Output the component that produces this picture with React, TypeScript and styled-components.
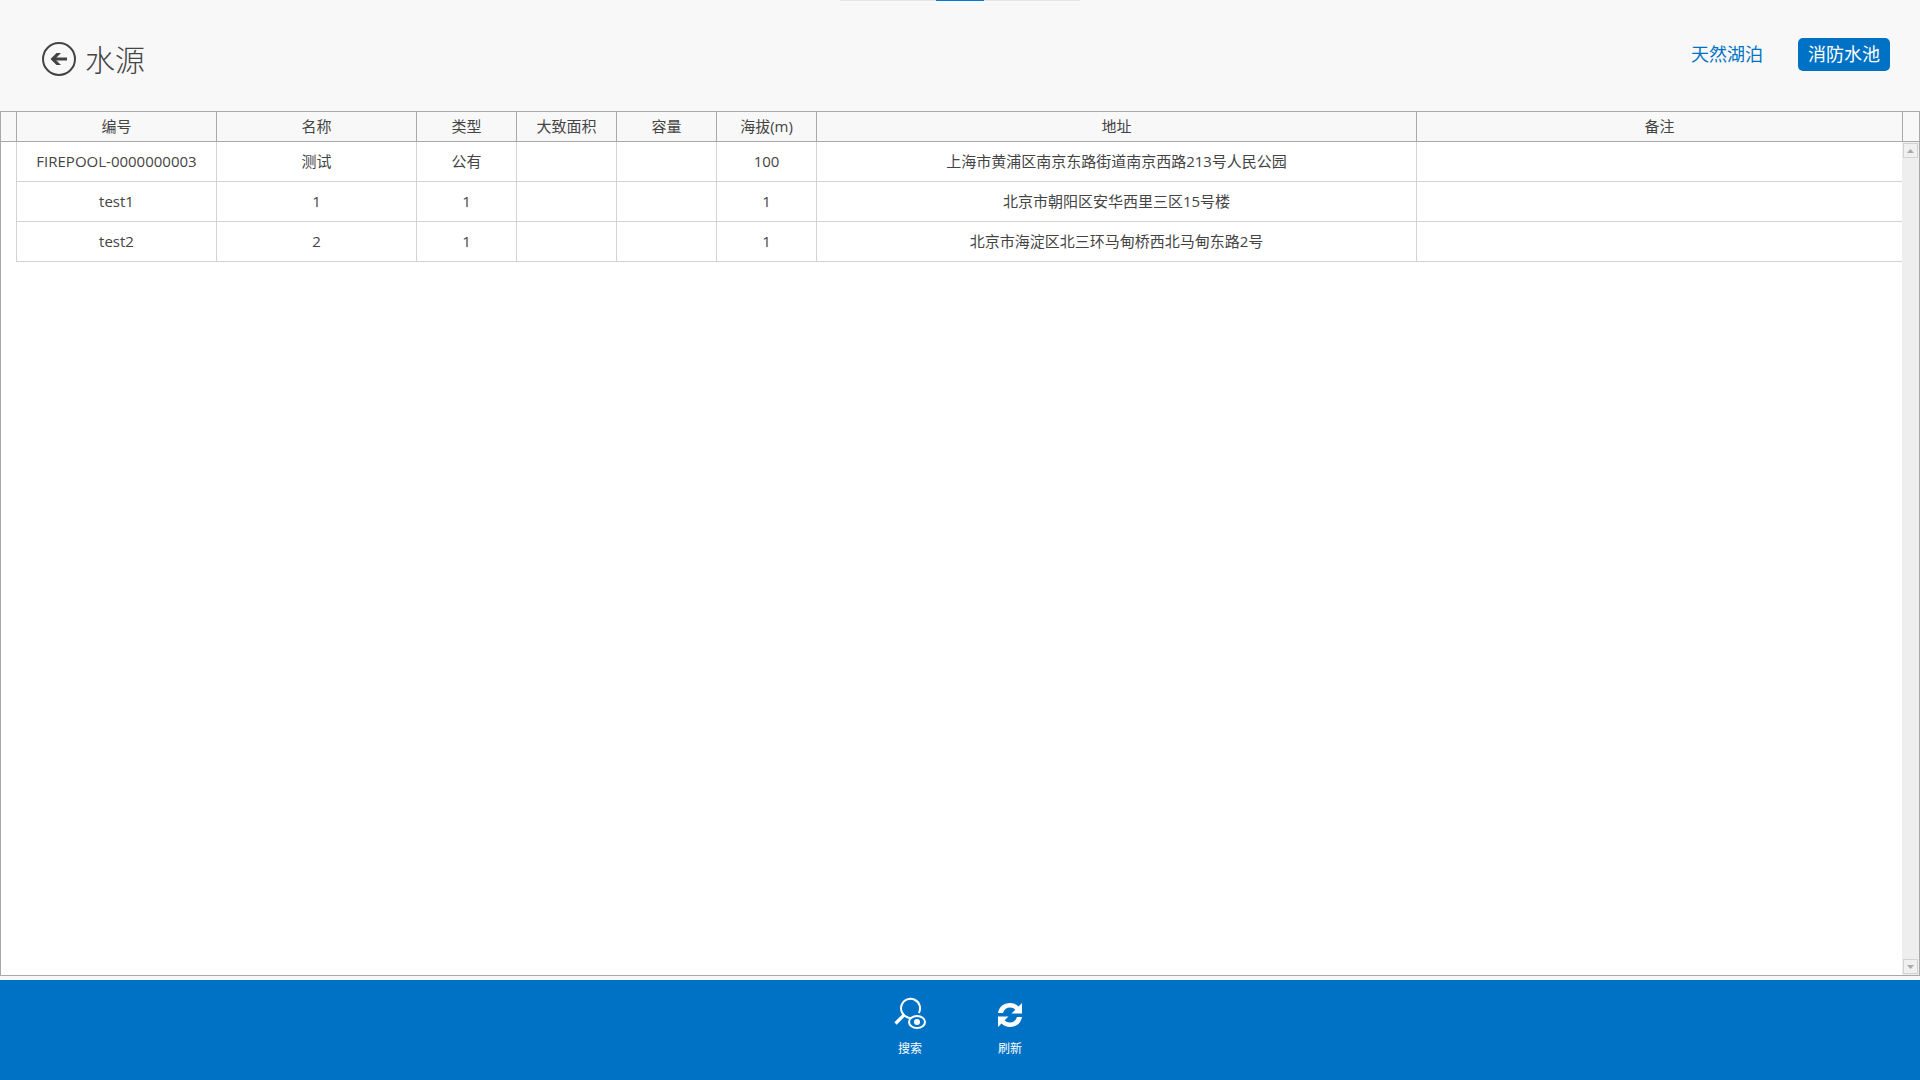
import React from "react";
import styled, { createGlobalStyle } from "styled-components";

const GlobalStyle = createGlobalStyle`
  *, *::before, *::after { box-sizing: border-box; }
  body {
    margin: 0;
    background: #f8f8f8;
    color: #444;
    font-family: "Open Sans", "Noto Sans CJK SC", sans-serif;
    font-size: 15px;
  }
  button { font-family: inherit; padding: 0; border: 0; background: none; color: inherit; cursor: pointer; }
`;

const Page = styled.div`
  display: flex;
  flex-direction: column;
  height: 100vh;
  position: relative;
`;

const TopTrack = styled.div`
  position: absolute;
  top: 0;
  left: 50%;
  width: 240px;
  height: 1px;
  margin-left: -120px;
  display: flex;
  justify-content: center;
  background: #e5e5e5;
`;

const TopThumb = styled.span`
  width: 48px;
  height: 1px;
  background: #0078d7;
`;

const Header = styled.header`
  display: flex;
  justify-content: space-between;
  align-items: flex-start;
  height: 111px;
  padding: 38px 30px 0 42px;
  flex: none;
`;

const TitleGroup = styled.div`
  display: flex;
  align-items: center;
  gap: 9px;
  height: 42px;
`;

const BackButton = styled.button`
  display: flex;
  width: 34px;
  height: 34px;
`;

const Title = styled.h1`
  margin: 0;
  padding-top: 2px;
  font-size: 30px;
  line-height: 42px;
  font-weight: 300;
`;

const Tabs = styled.nav`
  display: flex;
  gap: 25px;
`;

const Tab = styled.button<{ $active?: boolean }>`
  && {
    height: 33px;
    padding: 0 10px;
    border-radius: 5px;
    font-size: 18px;
    line-height: 33px;
    font-weight: 400;
    color: ${(p) => (p.$active ? "#fff" : "#0072c6")};
    background: ${(p) => (p.$active ? "#0072c6" : "transparent")};
  }
`;

const GridPanel = styled.main`
  display: flex;
  flex: 1;
  min-height: 0;
  margin-bottom: 4px;
  border: 1px solid #a9a9a9;
  background: #fff;
`;

const GridArea = styled.div`
  flex: 1;
  min-width: 0;
`;

const Table = styled.table`
  width: 100%;
  table-layout: fixed;
  border-collapse: separate;
  border-spacing: 0;
`;

const HeadCell = styled.th`
  height: 30px;
  padding: 0 0 2px;
  border-right: 1px solid #a9a9a9;
  border-bottom: 1px solid #a9a9a9;
  background: #f8f8f8;
  font-weight: 400;
  line-height: 20px;

  &:last-child { border-right: 0; }
`;

const Cell = styled.td`
  height: 40px;
  padding: 0 0 2px;
  border-right: 1px solid #d3d3d3;
  border-bottom: 1px solid #d3d3d3;
  line-height: 20px;
  text-align: center;
  white-space: nowrap;

  &:last-child { border-right: 0; }
`;

const RowGutter = styled.td`
  padding: 0;
  border-right: 1px solid #d3d3d3;
`;

const Scroll = styled.div`
  display: flex;
  flex-direction: column;
  width: 17px;
  flex: none;
`;

const ScrollCorner = styled.div`
  height: 30px;
  background: #f8f8f8;
  border-left: 1px solid #a9a9a9;
  border-bottom: 1px solid #a9a9a9;
`;

const ScrollTrack = styled.div`
  flex: 1;
  display: flex;
  flex-direction: column;
  justify-content: space-between;
  align-items: center;
  padding: 1px 0;
  background: #eee;
`;

const ScrollButton = styled.button`
  && {
    display: flex;
    align-items: center;
    justify-content: center;
    width: 15px;
    height: 15px;
    border: 1px solid #d3d3d3;
    background: #f0f0f0;
  }
`;

const AppBar = styled.footer`
  display: flex;
  justify-content: center;
  height: 100px;
  flex: none;
  background: #0072c6;
`;

const AppBarButton = styled.button`
  && {
    display: flex;
    flex-direction: column;
    align-items: center;
    width: 100px;
    padding-top: 14px;
    gap: 5px;
    color: #fff;
    font-size: 12px;
    line-height: 20px;
  }
`;

const columns = [
  { title: "编号", width: 200 },
  { title: "名称", width: 200 },
  { title: "类型", width: 100 },
  { title: "大致面积", width: 100 },
  { title: "容量", width: 100 },
  { title: "海拔(m)", width: 100 },
  { title: "地址", width: 600 },
  { title: "备注" },
];

const rows = [
  ["FIREPOOL-0000000003", "测试", "公有", "", "", "100", "上海市黄浦区南京东路街道南京西路213号人民公园", ""],
  ["test1", "1", "1", "", "", "1", "北京市朝阳区安华西里三区15号楼", ""],
  ["test2", "2", "1", "", "", "1", "北京市海淀区北三环马甸桥西北马甸东路2号", ""],
];

function BackIcon() {
  return (
    <svg width="34" height="34" viewBox="0 0 34 34" fill="none" stroke="#444">
      <circle cx="17" cy="17" r="16" strokeWidth="2" />
      <path d="M25 17H12" strokeWidth="3" />
      <path d="M8.500 17L14.500 11H19L13 17L19 23H14.500Z" fill="#444" stroke="none" />
    </svg>
  );
}

function SearchIcon() {
  return (
    <svg width="40" height="40" viewBox="0 0 40 40" fill="none" stroke="#fff">
      <path d="M28.800 19A9.500 9.500 0 1 0 17.500 23.300Q19.500 24.300 22 23.600" strokeWidth="2" />
      <path d="M14.500 20.500L5.500 29.500" strokeWidth="3.200" />
      <ellipse cx="27" cy="28" rx="8" ry="6" strokeWidth="2" />
      <circle cx="27" cy="28" r="3" fill="#fff" stroke="none" />
    </svg>
  );
}

function RefreshIcon() {
  return (
    <svg width="40" height="40" viewBox="0 0 40 40" fill="#fff">
      <path d="M8 19C9 12.600 14 9 20 9C23.500 9 26.400 10.400 28.500 12.500L32 9V19.500H21.500L25.300 15.700C24 14.300 22.200 13.500 20 13.500C16.500 13.500 14 15.500 13 19Z" />
      <path d="M32 23C31 29.400 26 33 20 33C16.500 33 13.600 31.600 11.500 29.500L8 33V22.500H18.500L14.700 26.300C16 27.700 17.800 28.500 20 28.500C23.500 28.500 26 26.500 27 23Z" />
    </svg>
  );
}

export default function App() {
  return (
    <Page>
      <GlobalStyle />
      <TopTrack><TopThumb /></TopTrack>
      <Header>
        <TitleGroup>
          <BackButton aria-label="返回"><BackIcon /></BackButton>
          <Title>水源</Title>
        </TitleGroup>
        <Tabs>
          <Tab>天然湖泊</Tab>
          <Tab $active>消防水池</Tab>
        </Tabs>
      </Header>
      <GridPanel>
        <GridArea>
          <Table>
            <colgroup>
              <col width={16} />
              {columns.map((c) => <col key={c.title} width={c.width} />)}
            </colgroup>
            <thead>
              <tr>
                <HeadCell />
                {columns.map((c) => <HeadCell key={c.title} scope="col">{c.title}</HeadCell>)}
              </tr>
            </thead>
            <tbody>
              {rows.map((row) => (
                <tr key={row[0]}>
                  <RowGutter />
                  {row.map((text, i) => <Cell key={i}>{text}</Cell>)}
                </tr>
              ))}
            </tbody>
          </Table>
        </GridArea>
        <Scroll>
          <ScrollCorner />
          <ScrollTrack>
            <ScrollButton aria-label="向上滚动">
              <svg width="7" height="4" viewBox="0 0 7 4" fill="#a9a9a9"><path d="M0 4L3.500 0L7 4Z" /></svg>
            </ScrollButton>
            <ScrollButton aria-label="向下滚动">
              <svg width="7" height="4" viewBox="0 0 7 4" fill="#a9a9a9"><path d="M0 0L3.500 4L7 0Z" /></svg>
            </ScrollButton>
          </ScrollTrack>
        </Scroll>
      </GridPanel>
      <AppBar>
        <AppBarButton><SearchIcon />搜索</AppBarButton>
        <AppBarButton><RefreshIcon />刷新</AppBarButton>
      </AppBar>
    </Page>
  );
}
